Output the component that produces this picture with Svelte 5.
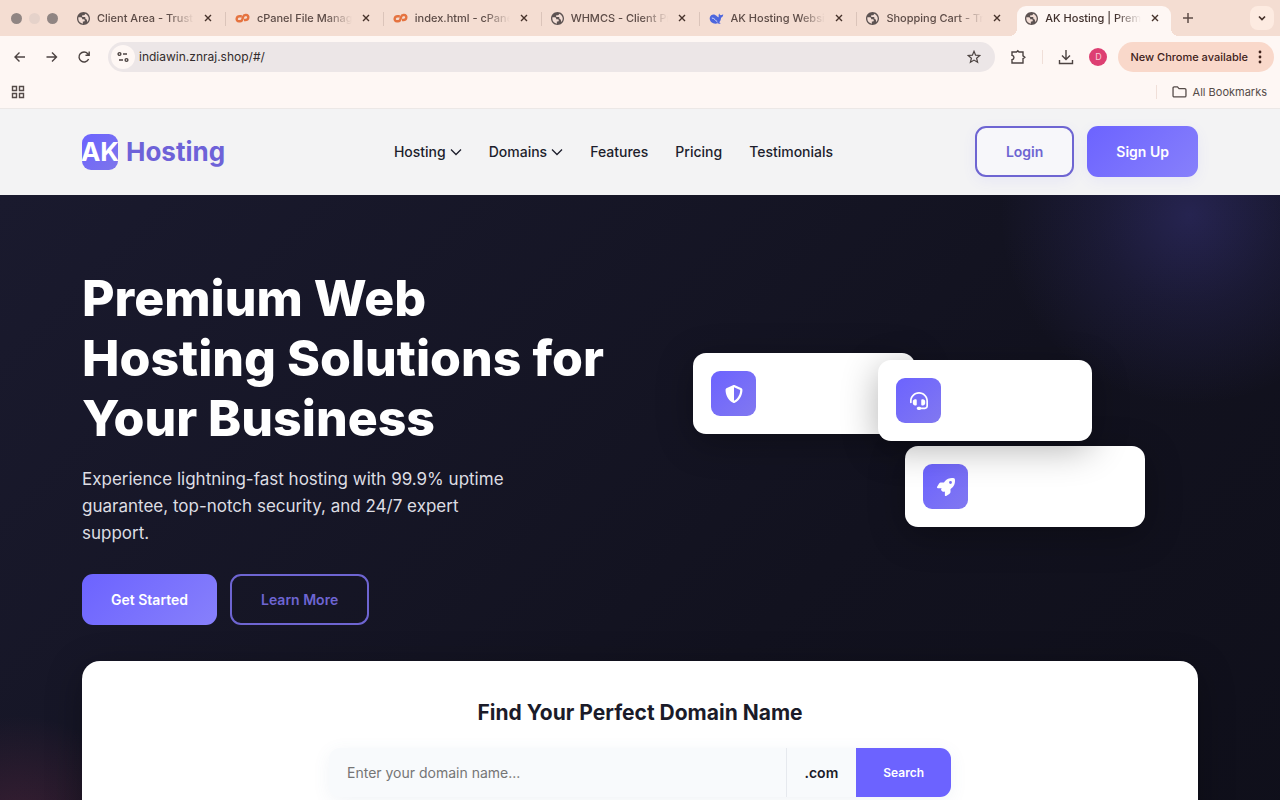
<script lang="ts">
	type Tab = { title: string; icon: 'globe' | 'cpanel' | 'whale'; active?: boolean };

	const tabs: Tab[] = [
		{ title: 'Client Area - Trust', icon: 'globe' },
		{ title: 'cPanel File Manag', icon: 'cpanel' },
		{ title: 'index.html - cPane', icon: 'cpanel' },
		{ title: 'WHMCS - Client Pr', icon: 'globe' },
		{ title: 'AK Hosting Websit', icon: 'whale' },
		{ title: 'Shopping Cart - Tr', icon: 'globe' },
		{ title: 'AK Hosting | Prem', icon: 'globe', active: true }
	];

	const navLinks = [
		{ label: 'Hosting', menu: true },
		{ label: 'Domains', menu: true },
		{ label: 'Features', menu: false },
		{ label: 'Pricing', menu: false },
		{ label: 'Testimonials', menu: false }
	];

	const shield =
		'M256 0c4.6 0 9.2 1 13.4 2.9L457.7 82.8c22 9.3 38.4 31 38.3 57.2c-.5 99.2-41.3 280.7-213.6 363.2c-16.7 8-36.1 8-52.8 0C57.3 420.7 16.5 239.2 16 140c-.1-26.2 16.3-47.9 38.3-57.2L242.7 2.9C246.8 1 251.4 0 256 0zm0 66.8V444.8C394 378 431.1 230.1 432 141.4L256 66.8z';
	const headset =
		'M256 48C141.1 48 48 141.1 48 256v40c0 13.3-10.7 24-24 24s-24-10.7-24-24V256C0 114.6 114.6 0 256 0S512 114.6 512 256V400.1c0 48.6-39.4 88-88.1 88L313.6 488c-8.3 14.3-23.8 24-41.6 24H240c-26.5 0-48-21.5-48-48s21.5-48 48-48h32c17.8 0 33.3 9.7 41.6 24l110.4 .1c22.1 0 40-17.9 40-40V256c0-114.9-93.1-208-208-208zM144 208h16c17.7 0 32 14.3 32 32V352c0 17.7-14.3 32-32 32H144c-35.3 0-64-28.7-64-64V272c0-35.3 28.7-64 64-64zm224 0c35.3 0 64 28.7 64 64v48c0 35.3-28.7 64-64 64H352c-17.7 0-32-14.3-32-32V240c0-17.7 14.3-32 32-32h16z';
	const rocket =
		'M156.6 384.9L125.7 354c-8.5-8.5-11.5-20.8-7.7-32.2c3-8.9 7-20.5 11.8-33.8L24 288c-8.6 0-16.6-4.6-20.9-12.1s-4.2-16.7 .2-24.1l52.5-88.5c13-21.9 36.5-35.3 61.9-35.3l82.3 0c2.4-4 4.8-7.7 7.2-11.3C289.1-4.1 411.1-8.1 483.9 5.3c11.6 2.1 20.6 11.2 22.8 22.8c13.4 72.9 9.3 194.8-111.4 276.7c-3.5 2.4-7.3 4.8-11.3 7.2v82.3c0 25.4-13.4 49-35.3 61.9l-88.5 52.5c-7.4 4.4-16.6 4.5-24.1 .2s-12.1-12.2-12.1-20.9V380.8c-14.1 4.9-26.4 8.9-35.7 11.9c-11.2 3.6-23.4 .5-31.8-7.8zM384 168a40 40 0 1 0 0-80 40 40 0 1 0 0 80z';

	const cards = [
		{ name: 'security', path: shield },
		{ name: 'speed', path: rocket },
		{ name: 'support', path: headset }
	];

	let address = $state('indiawin.znraj.shop/#/');
	let domain = $state('');
</script>

<div class="browser">
	<div class="tab-strip">
		<div class="lights"><span></span><span class="pale"></span><span></span></div>
		<div class="tabs">
			{#each tabs as tab}
				<div class="tab" class:active={tab.active}>
					{#if tab.icon === 'globe'}
						<svg class="favicon globe" viewBox="2 2 20 20">
							<circle cx="12" cy="12" r="9" fill="#f3ded6" />
							<path
								d="M12 2C6.48 2 2 6.48 2 12s4.48 10 10 10 10-4.48 10-10S17.52 2 12 2zM4 12c0-.6.1-1.2.2-1.8h3.6c1.2 0 2.2 1 2.2 2.2v.8h2.2c1 0 1.8.8 1.8 1.8 0 1-.8 1.8-1.8 1.8H11v3.1C7.05 19.4 4 16.1 4 12zm13.9 5.4c-.3-.8-.5-1.4-.5-2.2 0-1.3-1-2.4-2.4-2.4v-1.6c0-.8-.7-1.5-1.5-1.5H11c-.8 0-1.4-.6-1.4-1.4 0-.7.6-1.3 1.4-1.3h1c1.4 0 2.5-1 2.5-2.4C17.8 5.8 20 8.7 20 12c0 2.08-.8 3.97-2.1 5.4z"
							/>
						</svg>
					{:else if tab.icon === 'cpanel'}
						<svg class="favicon cpanel" viewBox="0 0 15 13">
							<path d="M6.8 4.2H4.6c-1.500 0-2.600 1-2.900 2.300-.3 1.500.7 2.800 2.200 2.800h1.300c1.200 0 1.800-.7 2.200-2l.7-2.400c.4-1.300 1-1.900 2.300-1.900h.7c1.500 0 2.500 1.300 2.200 2.700-.3 1.300-1.400 2.300-2.800 2.300H9" />
						</svg>
					{:else}
						<svg class="favicon whale" viewBox="0 0 16 14">
							<path
								d="M.8 6c.6-2.600 3.200-3.800 5.700-2.900C8 3.700 9 5.200 10.500 5.700 10 4 10.200 2.500 11 1.500c.3 1 .8 1.700 1.600 2 .9-.2 1.600-.7 2.600-1.200 0 2-.8 3.300-2.300 3.800-.2 2.300-.9 3.900-2 5 .5.6 1 .8 1.600 1-1.200.8-2.400.6-3.300.1C5 13.800-.1 10.800.8 6z"
							/>
							<path d="M3 6.500c3 0 4 3 6 4.300" fill="none" stroke="#dce0f8" />
						</svg>
					{/if}
					<span class="title">{tab.title}</span>
					<button class="close" aria-label="Close tab">
						<svg viewBox="0 0 8 8"><path d="M1 1l6 6M7 1L1 7" /></svg>
					</button>
				</div>
			{/each}
		</div>
		<button class="new-tab" aria-label="New tab">
			<svg viewBox="0 0 10 10"><path d="M5 0v10M0 5h10" /></svg>
		</button>
		<button class="tab-search" aria-label="Search tabs">
			<svg viewBox="0 0 8 8"><path d="M1 2.5l3 3 3-3" /></svg>
		</button>
	</div>

	<div class="toolbar">
		<div class="history">
			<button aria-label="Back"><svg viewBox="0 0 14 14"><path d="M12 7H2M6.500 2.500L2 7l4.500 4.500" /></svg></button>
			<button aria-label="Forward"><svg viewBox="0 0 14 14"><path d="M1.500 7h10M7 2.500L11.500 7 7 11.500" /></svg></button>
			<button aria-label="Reload">
				<svg viewBox="0 0 14 14"><path d="M11.6 9A5 5 0 1 1 10.8 3.7L12 5M12.2 1.5V5.2H8.5" /></svg>
			</button>
		</div>
		<div class="omnibox">
			<button class="site-info" aria-label="Site information">
				<svg viewBox="0 0 12 12">
					<circle cx="2.5" cy="3" r="1.4" /><path d="M6 3H10M2 9h4" /><circle cx="9.500" cy="9" r="1.4" />
				</svg>
			</button>
			<input type="text" aria-label="Address" bind:value={address} />
			<button class="star" aria-label="Bookmark this page">
				<svg viewBox="0 0 14 14">
					<path d="M7 1.3l1.6 3.9 4.2.3-3.2 2.7 1 4.1L7 10.1l-3.6 2.2 1-4.1L1.2 5.5l4.2-.3z" />
				</svg>
			</button>
		</div>
		<button class="extensions" aria-label="Extensions">
			<svg viewBox="0 0 16 16">
				<path d="M2 3h4.500L7.800 1.800 9 3h4v3.800l1.800 1.400L13 9.600V14H2v-3.300c2.600-.3 2.600-4 0-4.300z" />
			</svg>
		</button>
		<span class="divider"></span>
		<button class="downloads" aria-label="Downloads">
			<svg viewBox="0 0 16 16"><path d="M8 1v9M4 6.5l4 4 4-4M1.5 11v3.500h13V11" /></svg>
		</button>
		<button class="avatar">D</button>
		<button class="update">
			New Chrome available
			<svg viewBox="0 0 4 14"><circle cx="2" cy="2" r="1.4" /><circle cx="2" cy="7" r="1.4" /><circle cx="2" cy="12" r="1.4" /></svg>
		</button>
	</div>

	<div class="bookmarks">
		<button class="apps" aria-label="Apps">
			<svg viewBox="0 0 14 14">
				<path d="M1.5 1.5h4v4h-4zM8.5 1.5h4v4h-4zM1.5 8.5h4v4h-4zM8.5 8.5h4v4h-4z" />
			</svg>
		</button>
		<span class="divider"></span>
		<button class="all">
			<svg viewBox="0 0 16 13"><path d="M1 10.5v-8.300C1 1.500 1.500 1 2.200 1h3.600l1.700 1.800h6.200c.7 0 1.300.5 1.300 1.200v6.500c0 .8-.5 1.300-1.300 1.300H2.200C1.500 11.800 1 11.300 1 10.500z" /></svg>
			All Bookmarks
		</button>
	</div>

	<div class="page">
		<header>
			<div class="container bar">
				<a class="logo" href="#/"><span class="mark">AK</span>Hosting</a>
				<nav>
					{#each navLinks as link}
						<a href="#/">
							{link.label}
							{#if link.menu}
								<svg viewBox="0 0 12 8"><path d="M1 1.5l5 5 5-5" /></svg>
							{/if}
						</a>
					{/each}
				</nav>
				<div class="actions">
					<a class="btn outline" href="#/login">Login</a>
					<a class="btn primary" href="#/signup">Sign Up</a>
				</div>
			</div>
		</header>

		<main>
			<div class="container">
				<section class="hero">
					<div class="copy">
						<h1>Premium Web Hosting Solutions for Your Business</h1>
						<p>
							Experience lightning-fast hosting with 99.9% uptime guarantee, top-notch security, and
							24/7 expert support.
						</p>
						<div class="actions">
							<a class="btn primary" href="#/signup">Get Started</a>
							<a class="btn outline" href="#/features">Learn More</a>
						</div>
					</div>
					<div class="visual">
						{#each cards as card}
							<div class="card {card.name}">
								<span class="icon"><svg viewBox="0 0 512 512"><path d={card.path} /></svg></span>
							</div>
						{/each}
					</div>
				</section>

				<section class="domain">
					<h2>Find Your Perfect Domain Name</h2>
					<form onsubmit={(e) => e.preventDefault()}>
						<input
							type="text"
							aria-label="Domain name"
							placeholder="Enter your domain name..."
							bind:value={domain}
						/>
						<span class="tld">.com</span>
						<button type="submit">Search</button>
					</form>
				</section>
			</div>
		</main>
	</div>
</div>

<style>
	:global(body) {
		margin: 0;
	}

	.browser {
		--primary: #6c63ff;
		--gradient: linear-gradient(135deg, #6c63ff, #8780fb);

		display: flex;
		flex-direction: column;
		height: 100vh;
		overflow: hidden;
		font-family: Inter, 'Liberation Sans', sans-serif;
		background: #fef7f4;
	}

	.browser * {
		box-sizing: border-box;
	}

	button,
	input {
		margin: 0;
		padding: 0;
		border: none;
		background: none;
		font: inherit;
		color: inherit;
	}

	button {
		display: flex;
		align-items: center;
		justify-content: center;
		flex-shrink: 0;
	}

	a {
		color: inherit;
		text-decoration: none;
	}

	svg {
		display: block;
		flex-shrink: 0;
	}

	/* Tab strip */
	.tab-strip {
		display: flex;
		align-items: center;
		flex-shrink: 0;
		height: 36px;
		padding-right: 6px;
		background: #f4ddd2;
	}

	.lights {
		display: flex;
		flex-shrink: 0;
		gap: 7px;
		width: 70px;
		padding-left: 11px;
	}

	.lights span {
		width: 11px;
		height: 11px;
		border-radius: 50%;
		background: #908583;
	}

	.lights .pale {
		background: #e5d2ca;
	}

	.tabs {
		display: flex;
		align-self: stretch;
		min-width: 0;
	}

	.tab {
		position: relative;
		display: flex;
		align-items: center;
		flex: 0 1 158px;
		min-width: 0;
		padding: 0 14px 0 7px;
		color: #5d4c47;
		font-size: 11px;
		font-weight: 500;
	}

	.tab:not(.active)::after {
		content: '';
		position: absolute;
		right: 2px;
		top: 12px;
		width: 1px;
		height: 14px;
		background: #dbc4ba;
	}

	.tab:nth-last-child(2)::after {
		display: none;
	}

	.tab.active {
		margin: 6px 4px 0 0;
		padding: 0 10px 6px 8px;
		flex-basis: 154px;
		border-radius: 9px 9px 0 0;
		background: #fef7f4;
		color: #40302c;
	}

	/* flared feet of the active tab */
	.tab.active::before,
	.tab.active::after {
		content: '';
		position: absolute;
		right: auto;
		top: auto;
		bottom: 0;
		width: 8px;
		height: 8px;
	}

	.tab.active::before {
		left: -8px;
		background: radial-gradient(circle at 0 0, transparent 8px, #fef7f4 8px);
	}

	.tab.active::after {
		right: -8px;
		background: radial-gradient(circle at 100% 0, transparent 8px, #fef7f4 8px);
	}

	.favicon {
		width: 13px;
		height: 13px;
	}

	.globe {
		fill: #5d5352;
	}

	.cpanel {
		width: 15px;
		fill: none;
		stroke: #e57340;
		stroke-width: 2.4;
	}

	.whale {
		width: 15px;
		fill: #4d66dd;
	}

	.title {
		flex: 1;
		min-width: 0;
		margin-left: 7px;
		overflow: hidden;
		white-space: nowrap;
		mask-image: linear-gradient(90deg, #000 calc(100% - 26px), transparent);
	}

	.close {
		width: 12px;
		height: 16px;
		margin-left: 8px;
	}

	.close svg,
	.tab-search svg {
		width: 8px;
		height: 8px;
		fill: none;
		stroke: #46322b;
		stroke-width: 1.4;
	}

	.new-tab {
		width: 26px;
		height: 26px;
	}

	.new-tab svg {
		width: 10px;
		height: 10px;
		stroke: #5d4c47;
		stroke-width: 1.5;
	}

	.tab-search {
		width: 24px;
		height: 24px;
		margin-left: auto;
		border-radius: 8px;
		background: #fdebe1;
	}

	.tab-search svg {
		stroke-width: 1.7;
	}

	/* Toolbar */
	.toolbar {
		display: flex;
		align-items: center;
		flex-shrink: 0;
		height: 41px;
		padding: 0 6px 0 13px;
		color: #4c4341;
	}

	.toolbar svg,
	.bookmarks svg {
		fill: none;
		stroke: currentColor;
		stroke-width: 1.4;
	}

	.history {
		display: flex;
		gap: 18px;
	}

	.history svg,
	.star svg {
		width: 14px;
		height: 14px;
	}

	.omnibox {
		display: flex;
		align-items: center;
		flex: 1;
		min-width: 0;
		height: 30px;
		margin-left: 17px;
		padding: 0 14px 0 3px;
		border-radius: 15px;
		background: #ece6e7;
	}

	.site-info {
		width: 24px;
		height: 24px;
		border-radius: 50%;
		background: #fef7f4;
	}

	.site-info svg {
		width: 12px;
		height: 12px;
	}

	.omnibox input {
		flex: 1;
		min-width: 0;
		margin-left: 4px;
		color: #322c2c;
		font-size: 12px;
	}

	.star svg {
		stroke-width: 1.2;
	}

	.extensions {
		margin-left: 15px;
	}

	.extensions svg,
	.downloads svg {
		width: 16px;
		height: 16px;
	}

	.divider {
		width: 1px;
		height: 14px;
		background: #f0dfd8;
	}

	.toolbar .divider {
		margin: 0 15px 0 16px;
	}

	.avatar {
		width: 18px;
		height: 18px;
		margin-left: 15px;
		border-radius: 50%;
		background: #dd3f72;
		color: #f9cbd9;
		font-size: 9px;
	}

	.update {
		gap: 10px;
		height: 30px;
		margin-left: 11px;
		padding: 0 12px;
		border-radius: 15px;
		background: #f9d8ca;
		color: #3f221b;
		font-size: 11px;
		font-weight: 500;
	}

	.update svg {
		width: 4px;
		height: 14px;
		fill: currentColor;
		stroke: none;
	}

	/* Bookmarks bar */
	.bookmarks {
		display: flex;
		align-items: center;
		flex-shrink: 0;
		height: 32px;
		padding: 0 13px 1px 11px;
		border-bottom: 1px solid #ece8e6;
		color: #554b48;
	}

	.apps svg {
		width: 14px;
		height: 14px;
	}

	.bookmarks .divider {
		margin-left: auto;
	}

	.all {
		gap: 6px;
		margin-left: 15px;
		font-size: 11px;
	}

	.all svg {
		width: 15px;
		height: 12px;
	}

	/* Site */
	.page {
		display: flex;
		flex-direction: column;
		flex: 1;
		min-height: 0;
		overflow: hidden;
		background: #12121f;
	}

	.container {
		width: calc(100% - 48px);
		max-width: 1116px;
		margin: 0 auto;
	}

	header {
		flex-shrink: 0;
		padding: 17px 0 18px;
		background: #f3f3f4;
	}

	.bar {
		display: flex;
		align-items: center;
		justify-content: space-between;
	}

	.logo {
		display: flex;
		align-items: center;
		gap: 8px;
		padding-right: 27px;
		color: #6e62d8;
		font-size: 26px;
		font-weight: 700;
	}

	.mark {
		display: flex;
		align-items: center;
		justify-content: center;
		width: 36px;
		height: 36px;
		border-radius: 9px;
		background: linear-gradient(135deg, #6c63ff, #7d75ea);
		color: #fff;
	}

	nav {
		display: flex;
		gap: 27px;
		color: #1d1e2c;
		font-size: 14px;
		font-weight: 500;
	}

	nav a {
		display: flex;
		align-items: center;
		gap: 4px;
	}

	nav svg {
		width: 12px;
		height: 8px;
		fill: none;
		stroke: currentColor;
		stroke-width: 1.3;
	}

	.actions {
		display: flex;
		gap: 13px;
	}

	.btn {
		display: flex;
		align-items: center;
		height: 51px;
		padding: 0 29px;
		border-radius: 11px;
		font-size: 14px;
		font-weight: 600;
	}

	.btn.primary {
		background: var(--gradient);
		color: #fff;
	}

	.btn.outline {
		border: 2px solid #6e65d2;
		color: #6e65d2;
	}

	header .btn {
		box-shadow: 0 4px 14px rgba(108, 99, 255, 0.08);
	}

	header .outline {
		background: #f7f7fa;
	}

	main {
		flex: 1 0 auto;
		padding: 73px 0;
		background:
			radial-gradient(circle at 1190px 20px, rgba(108, 99, 255, 0.22), rgba(108, 99, 255, 0.1) 90px, transparent 190px),
			radial-gradient(circle at 20px 640px, rgba(255, 80, 120, 0.16), transparent 120px),
			linear-gradient(135deg, #1a1a2e, #12121f 60%, #0f0f1a);
	}

	.hero {
		display: grid;
		grid-template-columns: 1fr 1fr;
		gap: 36px;
	}

	h1,
	h2,
	p {
		margin: 0;
	}

	h1 {
		color: #fff;
		font-size: 50px;
		font-weight: 800;
		line-height: 60px;
	}

	p {
		max-width: 440px;
		margin: 18px 0 27px;
		color: #dddde3;
		font-size: 17px;
		line-height: 27px;
	}

	.visual {
		position: relative;
	}

	.card {
		position: absolute;
		padding: 18px;
		border-radius: 13px;
		background: #fff;
		box-shadow: 0 8px 36px rgba(0, 0, 0, 0.3);
	}

	.security {
		left: 35px;
		top: 85px;
		width: 222px;
	}

	.speed {
		right: 53px;
		top: 178px;
		width: 240px;
	}

	.support {
		left: 220px;
		top: 92px;
		width: 214px;
	}

	.icon {
		display: flex;
		align-items: center;
		justify-content: center;
		width: 45px;
		height: 45px;
		border-radius: 9px;
		background: linear-gradient(135deg, #6c63ff, #8178f0);
	}

	.icon svg {
		width: 18px;
		height: 18px;
		fill: #fff;
	}

	.domain {
		margin-top: 36px;
		padding: 36px;
		border-radius: 18px;
		background: #fff;
		box-shadow: 0 8px 36px rgba(0, 0, 0, 0.3);
	}

	h2 {
		color: #1b1b29;
		font-size: 21px;
		font-weight: 700;
		line-height: 32px;
		text-align: center;
	}

	form {
		display: flex;
		max-width: 622px;
		height: 49px;
		margin: 19px auto 0;
		border-radius: 11px;
		overflow: hidden;
		background: #f8fafc;
		box-shadow: 0 4px 18px rgba(80, 110, 150, 0.08);
	}

	form input {
		flex: 1;
		min-width: 0;
		padding: 0 18px;
		color: #1b1b29;
		font-size: 14px;
	}

	form input::placeholder {
		color: #757575;
	}

	.tld {
		display: flex;
		align-items: center;
		padding: 0 18px;
		border-left: 1px solid #e6e9ee;
		color: #1b1b29;
		font-size: 14px;
		font-weight: 600;
	}

	form button {
		padding: 0 27px;
		background: var(--primary);
		color: #fff;
		font-size: 12px;
		font-weight: 600;
	}
</style>
